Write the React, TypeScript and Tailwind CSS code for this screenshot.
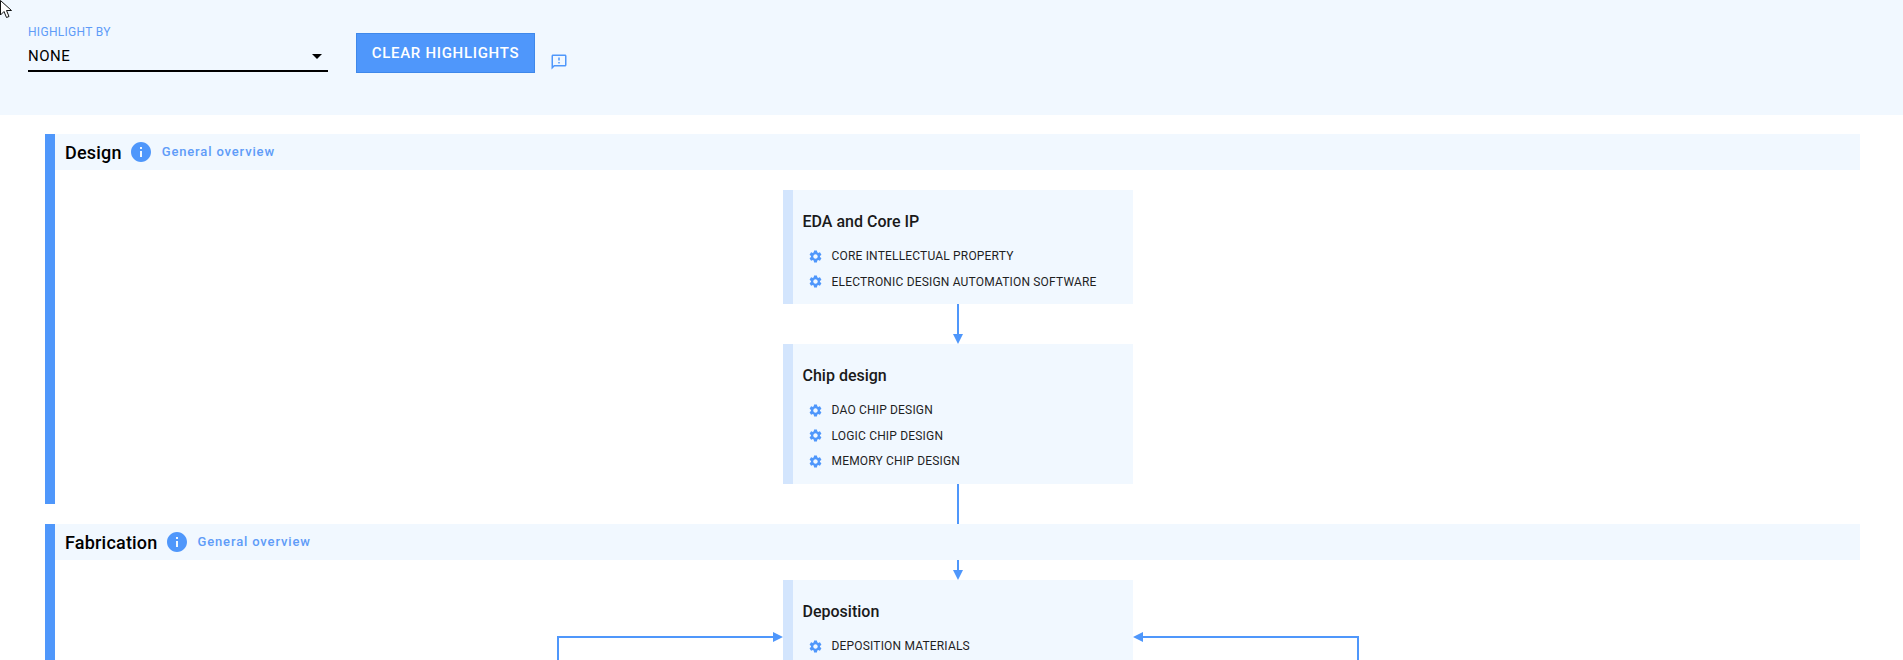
import { MdOutlineFeedback, MdSettings, MdInfo } from 'react-icons/md';

const font = "font-['Roboto',sans-serif]";

const Arrow = ({ height }: { height: number }) => {
  return (
    <svg width="12" height={height} className="block" aria-hidden="true">
      <rect x="5" y="0" width="2" height={height - 8} fill="#4f97fb" />
      <path d={`M1 ${height - 10} L11 ${height - 10} L6 ${height} Z`} fill="#4f97fb" />
    </svg>
  );
};

const Card = ({ title, items, className = '' }: { title: string; items: string[]; className?: string }) => {
  return (
    <div className={`w-[350px] bg-[#f1f8ff] border-l-[10px] border-[#d3e5fd] pl-[10px] pt-[22px] ${className}`}>
      <h3 className="text-[16px] leading-[20px] font-medium text-[#1a1a1a]">{title}</h3>
      <ul className="mt-[14px] flex flex-col gap-[5.5px] pb-[12px]">
        {items.map((item) => (
          <li key={item} className="flex items-center h-[20px] pl-[5px]">
            <MdSettings size={15} color="#4f97fb" />
            <span className="ml-[9px] text-[12px] tracking-[0.18px] text-[#1f1f1f]">{item}</span>
          </li>
        ))}
      </ul>
    </div>
  );
};

const SectionHeader = ({ title }: { title: string }) => {
  return (
    <div className="h-[36px] bg-[#f1f8ff] flex items-center pl-[10px]">
      <h2 className="text-[18px] font-medium text-black tracking-[0.2px]">{title}</h2>
      <MdInfo size={24} color="#4f97fb" className="ml-[7px]" />
      <a className="ml-[9px] text-[13px] font-medium tracking-[0.85px] text-[#5f9cf8]">General overview</a>
    </div>
  );
};

const App = () => {
  return (
    <div className={`relative h-screen overflow-hidden bg-white ${font}`}>
      {/* mouse pointer caught in the capture */}
      <svg width="14" height="20" viewBox="0 0 14 20" className="absolute left-0 top-0 z-10" aria-hidden="true">
        <path d="M0.5 0.5 L0.5 15 L4 11.5 L6.5 17.5 L9 16.5 L6.5 10.5 L11.5 10.5 Z" fill="#fff" stroke="#111" strokeWidth="1" />
      </svg>

      <header className="h-[115px] bg-[#f1f8ff] flex items-start pl-[28px]">
        <div className="w-[300px] pt-[25px]">
          <div className="text-[12px] leading-[14px] tracking-[0.3px] text-[#5f9cf8]">HIGHLIGHT BY</div>
          <div className="mt-[3px] h-[30px] flex items-center justify-between border-b-2 border-black pr-[6px]">
            <span className="text-[15px] tracking-[0.5px] text-black">NONE</span>
            <span className="w-0 h-0 border-x-[5px] border-x-transparent border-t-[5px] border-t-black" />
          </div>
        </div>
        <button className="ml-[28px] mt-[33px] w-[179px] h-[40px] bg-[#4f97fb] border border-[#3f88ea] text-white text-[15px] font-medium tracking-[0.7px]">
          CLEAR HIGHLIGHTS
        </button>
        <MdOutlineFeedback size={18} color="#4f97fb" className="ml-[15px] mt-[53px]" />
      </header>

      <main className="pl-[45px] pr-[43px] pt-[19px] flex flex-col gap-[20px]">
        <section className="border-l-[10px] border-[#4f97fb] h-[370px]">
          <SectionHeader title="Design" />
          <div className="flex flex-col items-center pt-[20px]">
            <Card title="EDA and Core IP" items={['CORE INTELLECTUAL PROPERTY', 'ELECTRONIC DESIGN AUTOMATION SOFTWARE']} className="h-[114px]" />
            <Arrow height={40} />
            <Card title="Chip design" items={['DAO CHIP DESIGN', 'LOGIC CHIP DESIGN', 'MEMORY CHIP DESIGN']} className="h-[140px]" />
            <div className="w-[2px] h-[40px] bg-[#4f97fb]" />
          </div>
        </section>

        <section className="border-l-[10px] border-[#4f97fb] relative">
          <SectionHeader title="Fabrication" />
          <div className="flex flex-col items-center">
            <Arrow height={20} />
            <div className="relative">
              <Card title="Deposition" items={['DEPOSITION MATERIALS']} />
              {/* side feedback loops coming into the card */}
              <svg width="226" height="40" className="absolute right-full top-[56px] overflow-visible" aria-hidden="true">
                <path d="M1 40 V1 H218" fill="none" stroke="#4f97fb" strokeWidth="2" />
                <path d="M216 -4 L226 1 L216 6 Z" fill="#4f97fb" />
              </svg>
              <svg width="226" height="40" className="absolute left-full top-[56px] overflow-visible" aria-hidden="true">
                <path d="M225 40 V1 H8" fill="none" stroke="#4f97fb" strokeWidth="2" />
                <path d="M10 -4 L0 1 L10 6 Z" fill="#4f97fb" />
              </svg>
            </div>
          </div>
        </section>
      </main>
    </div>
  );
};

export default App;
